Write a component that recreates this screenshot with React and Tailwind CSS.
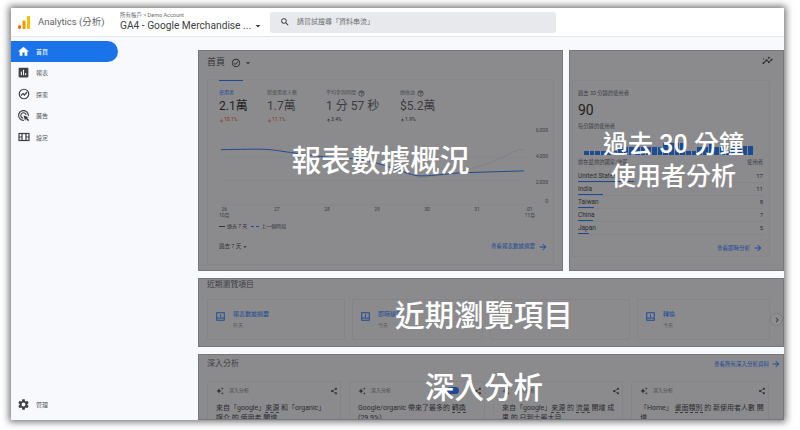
import React from "react";
import {
  MdHome,
  MdAssessment,
  MdOutlineAdsClick,
  MdSettings,
  MdSearch,
  MdArrowDropDown,
  MdOutlineCheckCircle,
  MdOutlineHelpOutline,
  MdArrowForward,
  MdChevronRight,
  MdShare,
  MdAutoAwesome,
  MdOutlineInsights,
  MdArrowDownward,
  MdArrowUpward,
} from "react-icons/md";

const FONT = "font-['Roboto','Noto_Sans_CJK_TC',sans-serif]";

function ExploreIcon() {
  return (
    <svg viewBox="0 0 24 24" className="w-[12px] h-[12px]" fill="none" stroke="#3c4043" strokeWidth="2.4">
      <circle cx="12" cy="12" r="9.5" />
      <path d="M6 15l4-4 3 3 5-6" />
    </svg>
  );
}

function ConfigIcon() {
  return (
    <svg viewBox="0 0 24 24" className="w-[12px] h-[12px]" fill="none" stroke="#3c4043" strokeWidth="2.4">
      <rect x="2" y="5" width="20" height="14" />
      <path d="M8 5v14M16 5v14M2 12h6M16 12h6" />
    </svg>
  );
}

function ReportIcon() {
  return (
    <svg viewBox="0 0 24 24" className="w-[9px] h-[9px] shrink-0 self-start mt-[12px]" fill="none" stroke="#1c4a94" strokeWidth="2.6">
      <rect x="2" y="2" width="20" height="20" />
      <path d="M2 16h20M12 6v7" />
    </svg>
  );
}

function Logo() {
  return (
    <svg viewBox="0 0 12 13" className="w-[12px] h-[13px]">
      <rect x="0" y="9" width="3" height="4" rx="1.5" fill="#e8710a" />
      <rect x="4.5" y="4.5" width="3" height="8.5" rx="1" fill="#f29900" />
      <rect x="9" y="0" width="3" height="13" rx="1" fill="#fbbc04" />
    </svg>
  );
}

const navItems = [
  { label: "報表", icon: <MdAssessment className="text-[13px] text-[#3c4043]" /> },
  { label: "探索", icon: <ExploreIcon /> },
  { label: "廣告", icon: <MdOutlineAdsClick className="text-[13px] text-[#3c4043]" /> },
  { label: "設定", icon: <ConfigIcon /> },
];

function Sidebar() {
  return (
    <aside className="w-[187px] shrink-0 flex flex-col pt-[4px] pb-[9px]">
      <div className="w-[107px] h-[21px] bg-[#1a73e8] rounded-r-full flex items-center gap-[6px] pl-[6px] text-white text-[6px]">
        <MdHome className="text-[13px]" />
        <span>首頁</span>
      </div>
      {navItems.map((item) => (
        <div key={item.label} className="h-[21.5px] flex items-center gap-[6px] pl-[6px] text-[6px] text-[#55585c]">
          <span className="w-[13px] flex justify-center">{item.icon}</span>
          <span>{item.label}</span>
        </div>
      ))}
      <div className="mt-auto h-[14px] flex items-center gap-[6px] pl-[6px] text-[6px] text-[#55585c]">
        <MdSettings className="text-[13px] text-[#3c4043]" />
        <span>管理</span>
      </div>
    </aside>
  );
}

const metrics = [
  { label: "使用者", value: "2.1萬", delta: "10.1%", down: true, active: true, w: "w-[48px]" },
  { label: "新使用者人數", value: "1.7萬", delta: "11.1%", down: true, w: "w-[59px]" },
  { label: "平均參與時間", value: "1 分 57 秒", delta: "3.4%", help: true, w: "w-[74px]" },
  { label: "總收益", value: "$5.2萬", delta: "1.9%", help: true, w: "w-[70px]" },
];

function Metric({ m }) {
  return (
    <div className={`${m.w} flex flex-col`}>
      <div className={`h-[10px] flex items-center gap-[2px] text-[5px] ${m.active ? "text-[#1c4a94]" : "text-[#4a4a4d]"}`}>
        {m.label}
        {m.help && <MdOutlineHelpOutline className="text-[7px] text-[#333]" />}
      </div>
      <div className={`mt-[1px] text-[12px] leading-[14px] whitespace-nowrap ${m.active ? "text-[#1d1d20]" : "text-[#3c3c40]"}`}>{m.value}</div>
      <div className={`mt-[3px] h-[8px] flex items-center text-[5px] ${m.down ? "text-[#8e2c22]" : "text-[#2a2a2c]"}`}>
        {m.down ? <MdArrowDownward className="text-[5px]" /> : <MdArrowUpward className="text-[5px]" />}
        {m.delta}
      </div>
    </div>
  );
}

function Chart() {
  return (
    <svg viewBox="0 0 340 87" className="w-[340px] h-[87px]">
      <path d="M2 33H315M2 57H315M2 82H315" stroke="#838386" strokeWidth="0.6" />
      <path d="M2 25 C20 25 40 24 52 25 S100 33 132 34 S190 50 205 52 C215 53 235 50 250 49 L315 47" fill="none" stroke="#1c4a94" strokeWidth="1" />
      <path d="M205 54 C240 52 275 42 295 32 S308 26 315 25" fill="none" stroke="#707074" strokeWidth="0.7" strokeDasharray="1.5 1" />
    </svg>
  );
}

const days = ["26", "27", "28", "29", "30", "31", "01"];
const yTicks = [
  { t: "6,000", cls: "h-[26px]" },
  { t: "4,000", cls: "h-[26px]" },
  { t: "2,000", cls: "h-[19px]" },
  { t: "0", cls: "h-[8px]" },
];

function OverviewPanel() {
  return (
    <section className="relative w-[365px] h-full shrink-0 bg-[#8b8b8e] border border-[#77777a] px-[8px] pt-[6px] overflow-hidden">
      <div className="flex items-center h-[12px] gap-[5px]">
        <span className="text-[9px] text-[#303033]">首頁</span>
        <MdOutlineCheckCircle className="text-[10px] ml-[1px] text-[#2f2f32]" />
        <MdArrowDropDown className="text-[10px] -ml-[3px] text-[#2f2f32]" />
      </div>
      <div className="mt-[10px] border border-[#858588] h-[186px] rounded-[2px] flex flex-col pl-[11px] pr-[5px]">
        <div className="w-[24px] h-[1px] bg-[#1c4a94]" />
        <div className="flex mt-[7px]">
          {metrics.map((m) => (
            <Metric key={m.label} m={m} />
          ))}
        </div>
        <div className="flex relative">
          <Chart />
          <div className="absolute left-[313px] top-[3px] flex flex-col text-[5px] leading-[7px] text-[#3c3c3f] items-end w-[16px]">
            {yTicks.map((y) => (
              <span key={y.t} className={y.cls}>{y.t}</span>
            ))}
          </div>
        </div>
        <div className="flex justify-between w-[316px] text-[5px] text-[#3c3c3f] leading-[6px] -mt-[5px]">
          {days.map((d, i) => (
            <span key={d} className="flex flex-col items-center">
              {d}
              {i === 0 && <span>10月</span>}
              {i === 6 && <span>11月</span>}
            </span>
          ))}
        </div>
        <div className="flex items-center text-[5px] text-[#333336] gap-[2px] mt-[5px]">
          <span className="w-[6px] h-[1px] bg-[#333]" />
          <span>過去 7 天</span>
          <span className="ml-[2px] w-[8px] border-t border-dashed border-[#1c4a94]" />
          <span>上一個時段</span>
        </div>
        <div className="flex justify-between items-center mt-[11px] text-[5.5px]">
          <span className="flex items-center text-[#333336]">
            過去 7 天
            <MdArrowDropDown className="text-[8px]" />
          </span>
          <a className="flex items-center gap-[3px] text-[#1c4a94]">
            查看報表數據摘要
            <MdArrowForward className="text-[10px]" />
          </a>
        </div>
      </div>
      <div className="absolute inset-0 flex items-center justify-center text-white text-[29.7px] font-medium leading-none">
        報表數據概況
      </div>
    </section>
  );
}

const bars = [
  4, 4, 4, 4, 4, 4, 8, 8, 8, 8, 8, 8, 8, 8, 12, 12, 12, 12, 4, 4, 8, 8, 11, 8, 8, 4, 9, 9, 9, 9,
];

const countries = [
  { name: "United States", n: 17, w: "w-[56px]" },
  { name: "India", n: 11, w: "w-[25px]" },
  { name: "Taiwan", n: 8, w: "w-[16px]" },
  { name: "China", n: 7, w: "w-[15px]" },
  { name: "Japan", n: 5, w: "w-[11px]" },
];

function RealtimePanel() {
  return (
    <section className="relative flex-1 h-full bg-[#8b8b8e] border border-[#77777a] px-[2px] pt-[4px] overflow-hidden">
      <div className="flex justify-end h-[10px] pr-[8px]">
        <MdOutlineInsights className="text-[11px] text-[#26262a]" />
      </div>
      <div className="mt-[15px] w-[198px] h-[177px] border border-[#858588] rounded-[2px] px-[5px] pt-[8px] flex flex-col">
        <div className="text-[5.3px] leading-[8px] text-[#3c3c3f]">過去 30 分鐘的使用者</div>
        <div className="text-[14px] leading-[17px] mt-[5px] text-[#1d1d20]">90</div>
        <div className="text-[5.3px] leading-[8px] mt-[3px] text-[#3c3c3f]">每分鐘的使用者</div>
        <div className="mt-[13px] ml-[6px] h-[12px] flex items-end gap-[1px] w-[169px]">
          {bars.map((h, i) => (
            <span key={i} className="flex-1 bg-[#1c4a94]" style={{ height: h }} />
          ))}
        </div>
        <div className="flex justify-between text-[5.3px] leading-[7px] mt-[4px] text-[#3c3c3f] w-[185px]">
          <span>排在最前的國家/地區</span>
          <span>使用者</span>
        </div>
        <div className="flex flex-col w-[185px] mt-[4px]">
          {countries.map((c) => (
            <div key={c.name} className="h-[13px] flex flex-col justify-end border-b border-[#858588]">
              <div className="flex justify-between text-[6.5px] leading-[10px] text-[#2c2c2f]">
                <span>{c.name}</span>
                <span className="text-[6px]">{c.n}</span>
              </div>
              <div className={`${c.w} h-[1px] bg-[#1c4a94]`} />
            </div>
          ))}
        </div>
        <a className="self-end flex items-center gap-[3px] text-[5.5px] text-[#1c4a94] mt-[8px] mr-[1px] w-fit">
          查看即時分析
          <MdArrowForward className="text-[10px]" />
        </a>
      </div>
      <div className="absolute inset-0 flex flex-col items-center justify-center text-white text-[25px] font-medium leading-[32px] pr-[6px]">
        <span>過去 30 分鐘</span>
        <span>使用者分析</span>
      </div>
    </section>
  );
}

const recent = [
  { title: "報表數據摘要", sub: "昨天", w: "w-[138px]" },
  { title: "即時總覽", sub: "今天", w: "w-[131px]" },
  { title: "", sub: "", w: "w-[140px]" },
  { title: "轉換", sub: "今天", w: "w-[133px]" },
];

function RecentPanel() {
  return (
    <section className="relative h-[69px] shrink-0 bg-[#8b8b8e] border border-[#77777a] px-[8px] overflow-hidden">
      <div className="text-[7.8px] leading-[12px] text-[#3c3c3f]">近期瀏覽項目</div>
      <div className="flex gap-[7px] mt-[8px]">
        {recent.map((r, i) => (
          <div key={i} className={`${r.w} h-[41px] shrink-0 border border-[#858588] rounded-[2px] flex items-center gap-[8px] px-[8px]`}>
            {r.title && <ReportIcon />}
            <div className="flex flex-col gap-[5px] text-[6px] leading-[6px]">
              <span className="text-[#1c4a94]">{r.title}</span>
              <span className="text-[5px] text-[#5a5a5d]">{r.sub}</span>
            </div>
          </div>
        ))}
      </div>
      <div className="absolute right-[0px] top-[34px] w-[13px] h-[13px] rounded-full bg-[#8f8f92] border border-[#7d7d80] flex items-center justify-center">
        <MdChevronRight className="text-[10px] text-[#303033]" />
      </div>
      <div className="absolute inset-0 flex items-center justify-center text-white text-[29.7px] font-medium leading-none pt-[7px] pr-[14px]">
        近期瀏覽項目
      </div>
    </section>
  );
}

const insights = [
  {
    w: "w-[134px]",
    textPr: "pr-[10px]",
    parts: [["來自「google」"], ["來源", true], [" 和「organic」媒介 的 "], ["使用者", true], [" 開增"]],
  },
  {
    w: "w-[136px]",
    textPr: "pr-[4px]",
    badge: true,
    parts: [["Google/organic 帶來了最多的 "], ["轉換", true], [" (29.9%)"]],
  },
  {
    w: "w-[130px]",
    textPr: "pr-[4px]",
    parts: [["來自「google」"], ["來源", true], [" 的 "], ["流量", true], [" 開增 成果 的 日到士最大目"]],
  },
  {
    w: "w-[138px]",
    textPr: "pr-[2px]",
    parts: [["「Home」 "], ["畫面類別", true], [" 的 新使用者人數 開增"]],
  },
];

function InsightsPanel() {
  return (
    <section className="relative flex-1 min-h-0 bg-[#8b8b8e] border border-[#77777a] px-[8px] overflow-hidden">
      <div className="flex justify-between items-center h-[18px] text-[8px] text-[#3c3c3f]">
        <span>深入分析</span>
        <a className="flex items-center gap-[2px] text-[5.5px] text-[#1c4a94] -mr-[6px]">
          查看所有深入分析資料
          <MdArrowForward className="text-[10px]" />
        </a>
      </div>
      <div className="flex gap-[8px] mt-[8px]">
        {insights.map((c, i) => (
          <div key={i} className={`${c.w} h-[60px] shrink-0 border border-[#858588] rounded-[2px] pl-[8px] pr-[2px] pt-[3px]`}>
            <div className="flex items-center h-[11px] text-[5px] text-[#4a4a4d] gap-[5px]">
              <MdAutoAwesome className="text-[8px] text-[#303033]" />
              <span>深入分析</span>
              {c.badge && <span className="ml-auto mr-[10px] w-[12px] h-[7px] rounded-full bg-[#1c4a94]" />}
              <MdShare className={`text-[8px] text-[#303033] ${c.badge ? "" : "ml-auto"}`} />
            </div>
            <p className={`text-[7px] leading-[10px] mt-[7px] text-[#2c2c2f] ${c.textPr}`}>
              {c.parts.map((p, j) => (
                <span key={j} className={p[1] ? "border-b border-dashed border-[#3c3c3f]" : ""}>{p[0]}</span>
              ))}
            </p>
          </div>
        ))}
      </div>
      <div className="absolute inset-0 flex items-center justify-center text-white text-[29.5px] font-medium leading-none pt-[4px] pr-[14px]">
        深入分析
      </div>
    </section>
  );
}

export default function App() {
  return (
    <div className={`w-[800px] h-[430px] bg-white pt-[8px] pl-[11px] overflow-hidden ${FONT}`}>
      <div className="w-[773px] h-[412px] bg-[#f8f9fd] flex flex-col shadow-[0_0_7px_2px_rgba(0,0,0,0.55)]">
        <header className="h-[29px] shrink-0 bg-white border-b border-[#e6e7ea] flex items-center pl-[7px]">
          <Logo />
          <span className="ml-[8px] text-[9.5px] text-[#5f6368] w-[82px]">Analytics (分析)</span>
          <div className="w-[150px] flex flex-col">
            <span className="text-[5.5px] leading-[7px] text-[#6b6e72]">所有帳戶 &gt; Demo Account</span>
            <span className="flex items-center text-[10.2px] leading-[13px] text-[#3c4043] whitespace-nowrap">
              GA4 - Google Merchandise ...
              <MdArrowDropDown className="text-[12px] ml-[1px] shrink-0" />
            </span>
          </div>
          <div className="w-[286px] h-[21px] bg-[#e8e9ec] rounded-[3px] flex items-center pl-[10px] gap-[7px] text-[7px] text-[#6b6e72]">
            <MdSearch className="text-[10px] text-[#303033]" />
            請嘗試搜尋「資料串流」
          </div>
        </header>
        <div className="flex-1 min-h-0 flex">
          <Sidebar />
          <main className="flex-1 min-w-0 pt-[13px] flex flex-col gap-[7px]">
            <div className="h-[221px] shrink-0 flex gap-[6px]">
              <OverviewPanel />
              <RealtimePanel />
            </div>
            <RecentPanel />
            <InsightsPanel />
          </main>
        </div>
      </div>
    </div>
  );
}
